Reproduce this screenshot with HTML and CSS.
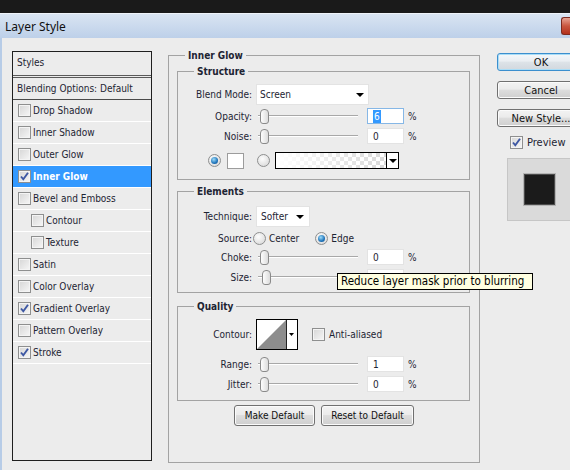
FILE: index.html
```html
<!DOCTYPE html>
<html lang="en">
<head>
  <meta charset="UTF-8" />
  <title>Layer Style</title>
  <link rel="stylesheet" href="styles.css">
</head>
<body>
  <div class="topbar"></div>
  <div class="window">
    <div class="titlebar">
      <span class="title">Layer Style</span>
      <span class="close"></span>
    </div>

    <div class="dialog">
      <div class="styles-list">
        <div class="list-head">Styles</div>
        <div class="list-row plain">Blending Options: Default</div>
        <div class="list-row"><span class="chk"></span>Drop Shadow</div>
        <div class="list-row"><span class="chk"></span>Inner Shadow</div>
        <div class="list-row"><span class="chk"></span>Outer Glow</div>
        <div class="list-row active"><span class="chk on"><svg viewBox="0 0 11 11"><path d="M2 5.5 L4.3 8.3 L9 1.8"/></svg></span>Inner Glow</div>
        <div class="list-row"><span class="chk"></span>Bevel and Emboss</div>
        <div class="list-row sub"><span class="chk"></span>Contour</div>
        <div class="list-row sub"><span class="chk"></span>Texture</div>
        <div class="list-row"><span class="chk"></span>Satin</div>
        <div class="list-row"><span class="chk"></span>Color Overlay</div>
        <div class="list-row"><span class="chk on"><svg viewBox="0 0 11 11"><path d="M2 5.5 L4.3 8.3 L9 1.8"/></svg></span>Gradient Overlay</div>
        <div class="list-row"><span class="chk"></span>Pattern Overlay</div>
        <div class="list-row"><span class="chk on"><svg viewBox="0 0 11 11"><path d="M2 5.5 L4.3 8.3 L9 1.8"/></svg></span>Stroke</div>
      </div>

      <fieldset class="group outer">
        <legend>Inner Glow</legend>

        <fieldset class="group inner structure">
          <legend>Structure</legend>
          <div class="row r-blend">
            <span class="lbl">Blend Mode:</span>
            <div class="select blend">Screen<i class="arrow"></i></div>
          </div>
          <div class="row r-opacity">
            <span class="lbl">Opacity:</span>
            <div class="slider"><i class="thumb"></i></div>
            <div class="num focus"><span class="sel">6</span></div>
            <span class="pct">%</span>
          </div>
          <div class="row r-noise">
            <span class="lbl">Noise:</span>
            <div class="slider"><i class="thumb"></i></div>
            <div class="num">0</div>
            <span class="pct">%</span>
          </div>
          <div class="color-row">
            <span class="radio on"></span>
            <span class="swatch"></span>
            <span class="radio second"></span>
            <div class="grad">
              <div class="grad-fill"></div>
              <div class="grad-arrow"><i class="arrow"></i></div>
            </div>
          </div>
        </fieldset>

        <fieldset class="group inner elements">
          <legend>Elements</legend>
          <div class="row r-tech">
            <span class="lbl">Technique:</span>
            <div class="select tech">Softer<i class="arrow"></i></div>
          </div>
          <div class="row r-source">
            <span class="lbl">Source:</span>
            <span class="radio"></span><span class="opt">Center</span>
            <span class="radio edge on"></span><span class="opt">Edge</span>
          </div>
          <div class="row r-choke">
            <span class="lbl">Choke:</span>
            <div class="slider"><i class="thumb"></i></div>
            <div class="num">0</div>
            <span class="pct">%</span>
          </div>
          <div class="row r-size">
            <span class="lbl">Size:</span>
            <div class="slider"><i class="thumb size"></i></div>
            <div class="num"></div>
          </div>
        </fieldset>

        <fieldset class="group inner quality">
          <legend>Quality</legend>
          <div class="row r-contour">
            <span class="lbl">Contour:</span>
            <div class="contour">
              <svg width="40" height="29" viewBox="0 0 40 29">
                <rect x="0" y="0" width="29" height="29" fill="#fff"/>
                <polygon points="0,29 29,0 29,29" fill="#8d8d8d"/>
                <line x1="29.5" y1="0" x2="29.5" y2="29" stroke="#222" stroke-width="1"/>
                <polygon points="32,13 37,13 34.5,16" fill="#000"/>
              </svg>
            </div>
            <span class="chk aa"></span><span class="opt">Anti-aliased</span>
          </div>
          <div class="row r-range">
            <span class="lbl">Range:</span>
            <div class="slider"><i class="thumb"></i></div>
            <div class="num">1</div>
            <span class="pct">%</span>
          </div>
          <div class="row r-jitter">
            <span class="lbl">Jitter:</span>
            <div class="slider"><i class="thumb"></i></div>
            <div class="num">0</div>
            <span class="pct">%</span>
          </div>
        </fieldset>

        <div class="btn-row">
          <button class="btn make">Make Default</button>
          <button class="btn reset">Reset to Default</button>
        </div>
      </fieldset>

      <div class="side">
        <button class="btn ok">OK</button>
        <button class="btn">Cancel</button>
        <button class="btn">New Style...</button>
        <div class="preview-chk"><span class="chk on"><svg viewBox="0 0 11 11"><path d="M2 5.5 L4.3 8.3 L9 1.8"/></svg></span>Preview</div>
        <div class="preview-box"><div class="preview-swatch"></div></div>
      </div>
    </div>
  </div>

  <div class="tooltip">Reduce layer mask prior to blurring</div>
</body>
</html>
```

FILE: styles.css
```css
* {
  box-sizing: border-box;
}

body {
  margin: 0;
  width: 570px;
  height: 470px;
  overflow: hidden;
  position: relative;
  background-color: #191919;
  font-family: "DejaVu Sans Condensed", "Liberation Sans", sans-serif;
  font-size: 10px;
  line-height: 13px;
  color: #1d2433;
}

.topbar {
  height: 13px;
  background-color: #1a1a1a;
}

.window {
  height: 457px;
  background-color: #ececec;
  border-top: 1px solid #eef3f9;
}

.titlebar {
  height: 24px;
  display: flex;
  align-items: center;
  justify-content: space-between;
  padding-left: 5px;
  background: linear-gradient(#d9e4f2, #bdd0e9);
}

.title {
  font-family: "Noto Sans", "Liberation Sans", sans-serif;
  font-size: 12px;
  color: #111;
}

.close {
  width: 9px;
  height: 18px;
  border: 1px solid #7d2b20;
  border-right: none;
  border-radius: 3px 0 0 3px;
  background: linear-gradient(#e7a494, #c9563f 50%, #b3311c);
}

.dialog {
  display: flex;
  align-items: flex-start;
  height: 432px;
  border-left: 2px solid #b7cce7;
  padding: 13px 0 0 10px;
}

/* styles list */

.styles-list {
  flex: none;
  width: 140px;
  height: 410px;
  border: 1px solid #1f1f1f;
}

.list-head {
  height: 26px;
  padding: 4px 0 0 4px;
  border-bottom: 3px double #5a5a5a;
}

.list-row {
  height: 22px;
  display: flex;
  align-items: center;
  gap: 1px;
  padding-left: 5px;
  border-bottom: 1px solid #fff;
  white-space: nowrap;
}

.list-row.plain {
  padding-left: 4px;
  border-bottom-color: #4a4a4a;
}

.list-row.sub {
  padding-left: 18px;
}

.list-row.active {
  background-color: #3399ff;
  color: #fff;
  font-weight: bold;
}

.chk {
  flex: none;
  width: 13px;
  height: 13px;
  margin-right: 1px;
  border: 1px solid #8e8f8f;
  background: linear-gradient(135deg, #d6d6d6, #f7f7f7);
  box-shadow: inset 0 0 0 1px #f4f4f4;
  display: flex;
  align-items: center;
  justify-content: center;
}

.chk svg {
  width: 11px;
  height: 11px;
}

.chk path {
  fill: none;
  stroke: #3d57a3;
  stroke-width: 1.9;
}

/* group boxes */

.group {
  margin: 0;
  padding: 0;
  min-width: 0;
  border: 1px solid #a3a3a3;
}

.group legend {
  padding: 0 3px;
  margin-left: 16px;
  font-weight: bold;
  line-height: 13px;
}

.group.outer {
  flex: none;
  width: 312px;
  height: 414px;
  margin: -2px 0 0 16px;
}

.group.inner {
  margin: 3px 9px 0 8px;
}

.structure {
  padding-bottom: 10px;
}

.group.elements {
  margin-top: 5px;
  padding-bottom: 7px;
}

.group.quality {
  margin-top: 7px;
  padding-bottom: 8px;
}

.row {
  display: flex;
  align-items: center;
  height: 16px;
}

.lbl {
  flex: none;
  width: 74px;
  margin-right: 4px;
  text-align: right;
}

.r-blend { height: 21px; margin-top: 6px; }
.r-opacity { margin-top: 3px; }
.r-noise { margin-top: 4px; }
.r-tech { height: 21px; margin-top: 8px; }
.r-source { height: 13px; margin-top: 5px; }
.r-choke { margin-top: 4px; }
.r-size { margin-top: 4px; }
.r-contour { height: 31px; margin-top: 6px; }
.r-range { margin-top: 6px; }
.r-jitter { margin-top: 4px; }

.r-source .lbl {
  margin-right: 1px;
}

.select {
  height: 21px;
  display: flex;
  align-items: center;
  justify-content: space-between;
  padding: 0 4px 0 3px;
  background-color: #fff;
  border: 1px solid #e3e3e3;
}

.select.blend { width: 113px; }
.select.tech { width: 54px; padding-left: 4px; padding-right: 5px; }

.arrow {
  width: 0;
  height: 0;
  border-left: 4px solid transparent;
  border-right: 4px solid transparent;
  border-top: 4px solid #000;
}

.slider {
  flex: none;
  width: 100px;
  height: 16px;
  margin-left: 2px;
  display: flex;
  align-items: center;
  background:
    linear-gradient(#a8a8a8, #a8a8a8) 0 7px / 100% 1px no-repeat,
    linear-gradient(#fff, #fff) 0 8px / 100% 1px no-repeat;
}

.thumb {
  width: 9px;
  height: 15px;
  margin-left: 2px;
  border: 1px solid #8a8a8a;
  border-radius: 4px 4px 3px 3px;
  background: linear-gradient(to right, #fdfdfd, #dcdcdc);
}

.thumb.size {
  margin-left: 4px;
}

.num {
  flex: none;
  width: 37px;
  height: 16px;
  margin-left: 9px;
  padding-left: 5px;
  display: flex;
  align-items: center;
  background-color: #fff;
  border: 1px solid #e3e3e3;
}

.num.focus {
  border-color: #86b7e6;
}

.num .sel {
  background-color: #3399ff;
  color: #fff;
  padding: 0 1px;
}

.pct {
  margin-left: 4px;
}

.radio {
  flex: none;
  width: 13px;
  height: 13px;
  border-radius: 50%;
  border: 1px solid #8e8f8f;
  background: radial-gradient(circle at 40% 35%, #fdfdfd, #d4d4d4);
  display: flex;
  align-items: center;
  justify-content: center;
}

.radio.on::after {
  content: "";
  width: 7px;
  height: 7px;
  border-radius: 50%;
  background: radial-gradient(circle at 40% 35%, #9ddcf9, #1f74bb 60%, #0d4b84);
}

.opt {
  margin-left: 3px;
}

.radio.edge {
  margin-left: 16px;
}

.color-row {
  display: flex;
  align-items: center;
  height: 17px;
  margin-top: 8px;
  padding-left: 30px;
}

.swatch {
  width: 17px;
  height: 16px;
  margin-left: 6px;
  background-color: #fff;
  border: 1px solid #9c9c9c;
}

.radio.second {
  margin-left: 13px;
}

.grad {
  width: 124px;
  height: 17px;
  margin-left: 5px;
  display: flex;
  border: 1px solid #000;
}

.grad-fill {
  flex: 1;
  background:
    linear-gradient(to right, #fff, rgba(255, 255, 255, 0)),
    repeating-conic-gradient(#d9d9d9 0 25%, #fff 0 50%) 0 0 / 8px 8px;
}

.grad-arrow {
  width: 12px;
  display: flex;
  align-items: center;
  justify-content: center;
  background-color: #fff;
  border-left: 1px solid #000;
}

.contour {
  width: 42px;
  height: 31px;
  border: 1px solid #000;
  background-color: #fff;
}

.contour svg {
  display: block;
}

.chk.aa {
  margin-left: 14px;
}

/* buttons */

.btn {
  font: inherit;
  color: #111;
  height: 21px;
  padding: 0;
  border: 1px solid #707070;
  border-radius: 3px;
  background: linear-gradient(#f3f3f3, #ebebeb 45%, #dddddd 50%, #cfcfcf);
  box-shadow: inset 0 0 0 1px #fbfbfb;
}

.btn-row {
  display: flex;
  justify-content: center;
  gap: 6px;
  margin-top: 4px;
}

.btn.make { width: 81px; }
.btn.reset { width: 93px; }

.side {
  flex: none;
  width: 90px;
  margin: 2px 0 0 17px;
  display: flex;
  flex-direction: column;
  align-items: flex-start;
}

.side .btn {
  width: 88px;
  height: 18px;
  margin-bottom: 10px;
  font-size: 11px;
  white-space: nowrap;
  text-align: center;
}

.side .btn.ok {
  border-color: #3c8fce;
  box-shadow: inset 0 0 0 1px #a9ddf7;
  background: linear-gradient(#f4f8fb, #eaeef2 45%, #dde3e8 50%, #d2d8de);
}

.preview-chk {
  display: flex;
  align-items: center;
  gap: 3px;
  margin: -1px 0 0 13px;
  font-size: 11px;
  height: 13px;
}

.preview-box {
  width: 70px;
  height: 63px;
  margin: 9px 0 0 10px;
  padding: 15px 0 0 16px;
  background-color: #dadada;
  border: 1px solid #c6c6c6;
}

.preview-swatch {
  width: 31px;
  height: 31px;
  background-color: #1b1b1b;
  border: 1px solid #4a4a4a;
  box-shadow: 0 0 0 1px #b5b5b5;
}

.tooltip {
  position: absolute;
  left: 337px;
  top: 273px;
  width: 196px;
  height: 17px;
  padding-left: 3px;
  border: 1px solid #000;
  background-color: #ffffe1;
  color: #000;
  font-size: 11.5px;
  line-height: 15px;
  white-space: nowrap;
}
```
